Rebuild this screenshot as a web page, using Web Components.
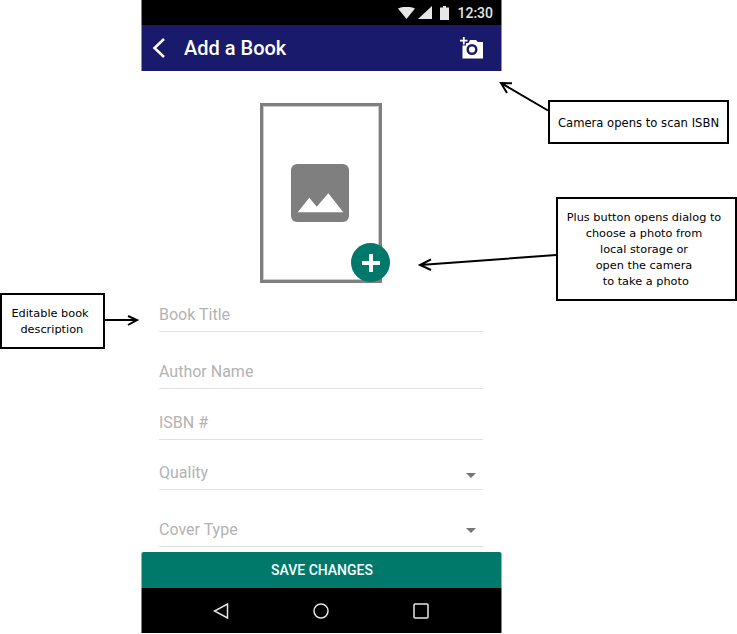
<!DOCTYPE html>
<html>
<head>
<meta charset="utf-8">
<title>Add a Book</title>
<style>
  html, body { margin: 0; background: #fff; }
  body { font-family: Roboto, sans-serif; }
</style>
</head>
<body>
<book-wireframe>
  <phone-screen>
    <book-field label="Book Title" style="--h:56px"></book-field>
    <book-field label="Author Name" style="--h:57px"></book-field>
    <book-field label="ISBN #" style="--h:51px"></book-field>
    <book-field label="Quality" dropdown style="--h:50px;--a:4px"></book-field>
    <book-field label="Cover Type" dropdown style="--h:57px;--a:6px"></book-field>
  </phone-screen>
  <call-out slot="notes" style="left:548px;top:100px;width:181px;height:44px;--fs:11.600px;--pr:0">Camera opens to scan ISBN</call-out>
  <call-out slot="notes" style="left:556px;top:197px;width:181px;height:104px">Plus button opens dialog to<br>choose a photo from<br>local storage or<br>open the camera<br>&nbsp;to take a photo</call-out>
  <call-out slot="notes" style="left:0;top:293px;width:105px;height:56px">Editable book<br>&nbsp;description</call-out>
</book-wireframe>

<script>
class BookWireframe extends HTMLElement {
  constructor() {
    super();
    this.attachShadow({ mode: "open" }).innerHTML = `
      <style>
        :host { display: block; position: relative; width: 737px; height: 634px; overflow: hidden; background: #fff; }
        .phone { display: flex; padding-left: 142px; }
        svg { position: absolute; left: 0; top: 0; }
      </style>
      <div class="phone"><slot></slot></div>
      <svg width="737" height="634" fill="none" stroke="#000" stroke-width="2">
        <path d="M548 110.500L501 83M512 83.300L501 83L507 93"/>
        <path d="M556 255L420 265M431 259.300L420 265L431 270"/>
        <path d="M104 320H137M128 316L137 320L128 325"/>
      </svg>
      <slot name="notes"></slot>`;
  }
}
customElements.define("book-wireframe", BookWireframe);

class CallOut extends HTMLElement {
  constructor() {
    super();
    this.attachShadow({ mode: "open" }).innerHTML = `
      <style>
        :host { position: absolute; box-sizing: border-box; display: flex; align-items: center; justify-content: center;
          border: 2px solid #000; background: #fff; color: #000; text-align: center; padding: 2px var(--pr, 5px) 0 0;
          font: var(--fs, 11.300px)/16px "DejaVu Sans", sans-serif; }
      </style>
      <div><slot></slot></div>`;
  }
}
customElements.define("call-out", CallOut);

class PhoneScreen extends HTMLElement {
  constructor() {
    super();
    this.attachShadow({ mode: "open" }).innerHTML = `
      <style>
        :host { display: flex; flex-direction: column; width: 359px; height: 633px; font-family: Roboto, sans-serif; }
        /* the edge pixel on each side is a half tone of the bar colour */
        .status, .nav { box-shadow: -1px 0 0 #808080, 1px 0 0 #808080; }
        .status { height: 25px; background: #000; color: #e6e6e6; display: flex; align-items: center; justify-content: flex-end;
          font-size: 14px; font-weight: 500; padding-right: 8px; }
        .status svg { display: block; }
        .bar { height: 46px; background: #1a1a6c; color: #fff; display: flex; align-items: center; padding: 0 18px 0 10px;
          box-shadow: -1px 0 0 #8c8cb5, 1px 0 0 #8c8cb5; }
        .bar h1 { margin: 0 0 0 18px; flex: 1; font-size: 20px; font-weight: 500; }
        .main { flex: 1; display: flex; flex-direction: column; padding: 32px 18px 0 17px; }
        .cover { position: relative; align-self: flex-start; box-sizing: border-box; width: 122px; height: 180px; margin-left: 101px;
          border: 3px solid #7f7f7f; box-shadow: inset 0 0 0 1px rgba(127,127,127,.4);
          display: flex; align-items: center; justify-content: center; }
        .fab { position: absolute; right: -11px; bottom: -2px; width: 39px; height: 39px; border-radius: 50%; background: #00796b;
          display: flex; align-items: center; justify-content: center; }
        .fields { display: flex; flex-direction: column; margin-top: -7px; }
        .save { height: 36px; background: #00796b; color: #fff; display: flex; align-items: center; justify-content: center;
          font-size: 14px; font-weight: 500; border-radius: 2px 2px 0 0; padding-left: 1px;
          box-shadow: -1px 0 0 #80bcb5, 1px 0 0 #80bcb5; }
        .nav { height: 45px; background: #000; display: flex; align-items: center; justify-content: center; gap: 84px; padding-right: 1px; }
        .nav svg { display: block; }
      </style>
      <div class="status">
        <svg width="17" height="12" viewBox="0 0 17 12"><path d="M0 1.500Q8.500-2 17 1.500L8.500 12Z" fill="#e6e6e6"/></svg>
        <svg width="14" height="13" viewBox="0 0 14 13" style="margin-left:3px"><path d="M14 0V13H0Z" fill="#e6e6e6"/></svg>
        <svg width="9" height="14" viewBox="0 0 9 14" style="margin-left:8px"><path d="M3 0H6V1.500H9V14H0V1.500H3Z" fill="#e6e6e6"/></svg>
        <span style="margin-left:8px">12:30</span>
      </div>
      <div class="bar">
        <svg width="14" height="20" viewBox="0 0 14 20" fill="none" stroke="#fff" stroke-width="2.500"><path d="M12 1L2.500 10L12 19"/></svg>
        <h1>Add a Book</h1>
        <svg width="24" height="24" viewBox="0 0 24 24">
          <path d="M1 3.800H3.900V1H5.700V3.800H8.500V5.600H5.700V8.500H3.900V5.600H1Z" fill="#fff"/>
          <path d="M3.500 9.500H7V7H9.500L11 4H17L18.800 6H24V22.500H3.500Z" fill="#fff"/>
          <circle cx="13" cy="13.500" r="4.300" fill="none" stroke="#1a1a6c" stroke-width="2.400"/>
        </svg>
      </div>
      <div class="main">
        <div class="cover">
          <svg width="58" height="58" viewBox="0 0 58 58" style="margin-right:2px">
            <rect width="58" height="58" rx="6" fill="#7f7f7f"/>
            <path d="M6.700 48.300L18.300 33.700L25.700 42.700L37.300 29.300L52.300 48.300Z" fill="#fff"/>
          </svg>
          <div class="fab">
            <svg width="22" height="22" viewBox="0 0 22 22"><path d="M11 2V20M2 11H20" stroke="#fff" stroke-width="4"/></svg>
          </div>
        </div>
        <div class="fields"><slot></slot></div>
      </div>
      <div class="save">SAVE CHANGES</div>
      <div class="nav">
        <svg width="16" height="16" viewBox="0 0 16 16" fill="none" stroke="#e6e6e6" stroke-width="1.500"><path d="M14.500 1V15L1.500 8Z"/></svg>
        <svg width="16" height="16" viewBox="0 0 16 16" fill="none" stroke="#e6e6e6" stroke-width="1.500"><circle cx="8" cy="8" r="7"/></svg>
        <svg width="16" height="16" viewBox="0 0 16 16" fill="none" stroke="#e6e6e6" stroke-width="1.500"><rect x="1" y="1" width="14" height="14" rx="1"/></svg>
      </div>`;
  }
}
customElements.define("phone-screen", PhoneScreen);

class BookField extends HTMLElement {
  constructor() {
    super();
    this.attachShadow({ mode: "open" }).innerHTML = `
      <style>
        :host { display: flex; align-items: flex-end; box-sizing: border-box; height: var(--h); padding-bottom: 7px;
          border-bottom: 1px solid #e0e0e0; font: 16px/19px Roboto, sans-serif; color: #b3b3b3; }
        span { flex: 1; }
        i { width: 0; height: 0; margin: 0 7px var(--a, 4px) 0; border: 5px solid transparent; border-top: 5px solid #757575; border-bottom: 0; }
      </style>
      <span></span><i></i>`;
  }
  connectedCallback() {
    this.shadowRoot.querySelector("span").textContent = this.getAttribute("label");
    if (!this.hasAttribute("dropdown")) this.shadowRoot.querySelector("i").remove();
  }
}
customElements.define("book-field", BookField);
</script>
</body>
</html>
